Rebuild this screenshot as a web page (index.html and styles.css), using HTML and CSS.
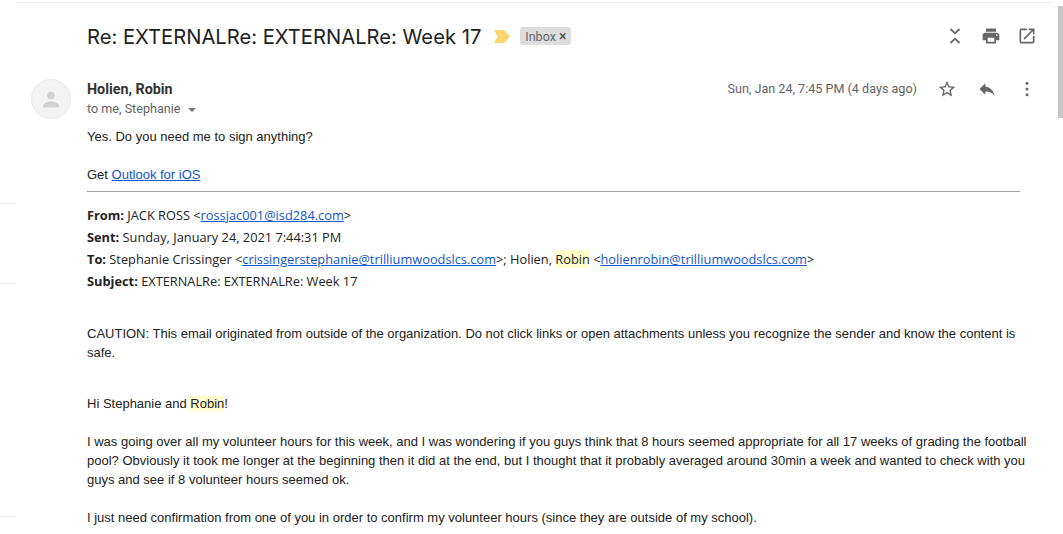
FILE: index.html
```html
<!DOCTYPE html>
<html lang="en">
<head>
    <meta charset="UTF-8">
    <title>Re: EXTERNALRe: EXTERNALRe: Week 17</title>
    <link rel="stylesheet" href="styles.css">
</head>
<body>
    <div class="page">
        <!-- Left edge of the list behind the message -->
        <div class="side">
            <div class="side-line side-line-1"></div>
            <div class="side-line side-line-2"></div>
            <div class="side-line side-line-3"></div>
        </div>

        <div class="main">
            <div class="subject-row">
                <h1 class="subject">Re: EXTERNALRe: EXTERNALRe: Week 17</h1>
                <svg class="marker" width="16" height="13" viewBox="0 0 16 13"><path d="M0 0h10l6 6.500-6 6.500H0l3.500-6.500z" fill="#fbd56f"/></svg>
                <span class="label">Inbox <span class="label-x">×</span></span>
                <div class="subject-icons">
                    <svg width="20" height="20" viewBox="0 0 20 20" fill="none" stroke="#666666" stroke-width="1.800"><path d="M5.500 3l4.500 4.300L14.500 3M5.500 17l4.500-4.300 4.500 4.300"/></svg>
                    <svg width="20" height="20" viewBox="0 0 24 24" fill="#666666"><path d="M19 8H5c-1.660 0-3 1.340-3 3v6h4v4h12v-4h4v-6c0-1.660-1.340-3-3-3zm-3 11H8v-5h8v5zm3-7c-.55 0-1-.45-1-1s.45-1 1-1 1 .45 1 1-.45 1-1 1zm-1-9H6v4h12V3z"/></svg>
                    <svg width="20" height="20" viewBox="0 0 24 24" fill="#666666"><path d="M19 19H5V5h7V3H5c-1.110 0-2 .9-2 2v14c0 1.100.89 2 2 2h14c1.100 0 2-.9 2-2v-7h-2v7zM14 3v2h3.590l-9.830 9.830 1.410 1.410L19 6.410V10h2V3h-7z"/></svg>
                </div>
            </div>

            <div class="message">
                <div class="avatar">
                    <svg width="24" height="24" viewBox="0 0 24 24" fill="#d2d2d2"><circle cx="12" cy="8.500" r="3.800"/><path d="M4 19c0-2.500 5-4.500 8-4.500s8 2 8 4.500v1.500H4z"/></svg>
                </div>
                <div class="message-body">
                    <div class="sender-row">
                        <div class="sender-info">
                            <div class="sender-name">Holien, Robin</div>
                            <div class="recipients">to me, Stephanie <span class="caret"></span></div>
                        </div>
                        <div class="date">Sun, Jan 24, 7:45 PM (4 days ago)</div>
                        <div class="message-icons">
                            <svg width="20" height="20" viewBox="0 0 24 24" fill="#666666"><path d="M22 9.240l-7.190-.62L12 2 9.190 8.630 2 9.240l5.460 4.730L5.820 21 12 17.270 18.180 21l-1.630-7.030L22 9.240zM12 15.400l-3.760 2.270 1-4.280-3.320-2.880 4.380-.38L12 6.100l1.710 4.040 4.380.38-3.320 2.880 1 4.280L12 15.400z"/></svg>
                            <svg width="20" height="20" viewBox="0 0 24 24" fill="#666666"><path d="M10 9V5l-7 7 7 7v-4.100c5 0 8.500 1.600 11 5.100-1-5-4-10-11-11z"/></svg>
                            <svg width="20" height="20" viewBox="0 0 24 24" fill="#666666"><circle cx="12" cy="5" r="1.800"/><circle cx="12" cy="12" r="1.800"/><circle cx="12" cy="19" r="1.800"/></svg>
                        </div>
                    </div>

                    <div class="content">
                        <p class="reply">Yes. Do you need me to sign anything?</p>
                        <p class="outlook">Get <a href="#">Outlook for iOS</a></p>
                        <hr class="rule">
                        <div class="quoted-head">
                            <div><b>From:</b> JACK ROSS &lt;<a href="#">rossjac001@isd284.com</a>&gt;</div>
                            <div><b>Sent:</b> Sunday, January 24, 2021 7:44:31 PM</div>
                            <div><b>To:</b> Stephanie Crissinger &lt;<a href="#">crissingerstephanie@trilliumwoodslcs.com</a>&gt;; Holien, <mark>Robin</mark> &lt;<a href="#">holienrobin@trilliumwoodslcs.com</a>&gt;</div>
                            <div><b>Subject:</b> EXTERNALRe: EXTERNALRe: Week 17</div>
                        </div>
                        <p class="caution">CAUTION: This email originated from outside of the organization. Do not click links or open attachments unless you recognize the sender and know the content is safe.</p>
                        <p class="greeting">Hi Stephanie and <mark>Robin</mark>!</p>
                        <p class="para">I was going over all my volunteer hours for this week, and I was wondering if you guys think that 8 hours seemed appropriate for all 17 weeks of grading the football pool? Obviously it took me longer at the beginning then it did at the end, but I thought that it probably averaged around 30min a week and wanted to check with you guys and see if 8 volunteer hours seemed ok.</p>
                        <p class="para">I just need confirmation from one of you in order to confirm my volunteer hours (since they are outside of my school).</p>
                    </div>
                </div>
            </div>
        </div>

        <div class="scrollbar-track">
            <div class="scrollbar"></div>
        </div>
    </div>
</body>
</html>
```

FILE: styles.css
```css
html, body {
    margin: 0;
    height: 534px;
    overflow: hidden;
    background-color: #ffffff;
}

body {
    font-family: Roboto, 'Liberation Sans', Arial, sans-serif;
    color: #222222;
}

.page {
    display: flex;
    height: 534px;
}

.side {
    width: 15px;
    flex-shrink: 0;
    position: relative;
}

.side-line {
    position: absolute;
    left: 0;
    width: 15px;
    height: 1px;
    background-color: #eeeeee;
}

.side-line-1 { top: 203px; }
.side-line-2 { top: 283px; }
.side-line-3 { top: 516px; }

.main {
    flex: 1;
    min-width: 0;
    border-top: 1px solid #efefef;
    margin-top: 2px;
}

.subject-row {
    display: flex;
    align-items: center;
    height: 66px;
    padding-left: 72px;
    margin-bottom: 10px;
}

.subject {
    margin: 0;
    font-family: Inter, Roboto, sans-serif;
    font-size: 20.2px;
    font-weight: 400;
    color: #202124;
}

.marker {
    margin-left: 13px;
}

.label {
    margin-left: 10px;
    padding: 0 5px;
    height: 18px;
    line-height: 18px;
    background-color: #dddddd;
    border-radius: 3px;
    font-size: 12.5px;
    color: #666666;
}

.label-x {
    font-size: 14px;
    color: #444444;
}

.subject-icons {
    margin-left: auto;
    margin-right: 16px;
    display: flex;
    gap: 16px;
}

.message {
    display: flex;
    padding-left: 16px;
}

.avatar {
    width: 40px;
    height: 40px;
    box-sizing: border-box;
    flex-shrink: 0;
    border: 1px solid #e8e8e8;
    border-radius: 50%;
    background-color: #f3f3f3;
    display: flex;
    align-items: center;
    justify-content: center;
}

.message-body {
    flex: 1;
    min-width: 0;
    padding-left: 16px;
}

.sender-row {
    display: flex;
    align-items: flex-start;
    height: 48px;
}

.sender-info {
    flex: 1;
}

.sender-name {
    font-size: 14.3px;
    font-weight: 700;
    line-height: 20px;
    color: #333333;
}

.recipients {
    font-size: 12.6px;
    line-height: 20px;
    color: #5f6368;
}

.caret {
    display: inline-block;
    margin-left: 4px;
    vertical-align: middle;
    border-left: 4px solid transparent;
    border-right: 4px solid transparent;
    border-top: 4px solid #777777;
}

.date {
    font-size: 12.6px;
    line-height: 20px;
    color: #5f6368;
    margin-right: 20px;
}

.message-icons {
    display: flex;
    gap: 20px;
    margin-right: 16px;
}

.content {
    font-family: 'Liberation Sans', Arial, sans-serif;
    font-size: 13px;
    line-height: 19px;
    color: #222222;
    width: 950px;
}

.content a {
    color: #1155cc;
}

.content p {
    margin: 0;
}

.outlook {
    padding-top: 19px;
}

.rule {
    margin: 7px 17px 0 0;
    border: 0;
    height: 1px;
    background-color: #a0a0a0;
}

.quoted-head {
    margin-top: 12px;
    font-family: 'Open Sans', sans-serif;
    font-size: 12.8px;
    line-height: 22px;
}

mark {
    background-color: #ffffcc;
    color: inherit;
}

.content .caution {
    margin-top: 32px;
}

.content .greeting {
    margin-top: 32px;
}

.content .para {
    margin-top: 19px;
}

.scrollbar-track {
    width: 10px;
    flex-shrink: 0;
    display: flex;
    justify-content: flex-end;
}

.scrollbar {
    margin-top: 6px;
    width: 5px;
    height: 112px;
    background-color: #c6c6c6;
}
```
